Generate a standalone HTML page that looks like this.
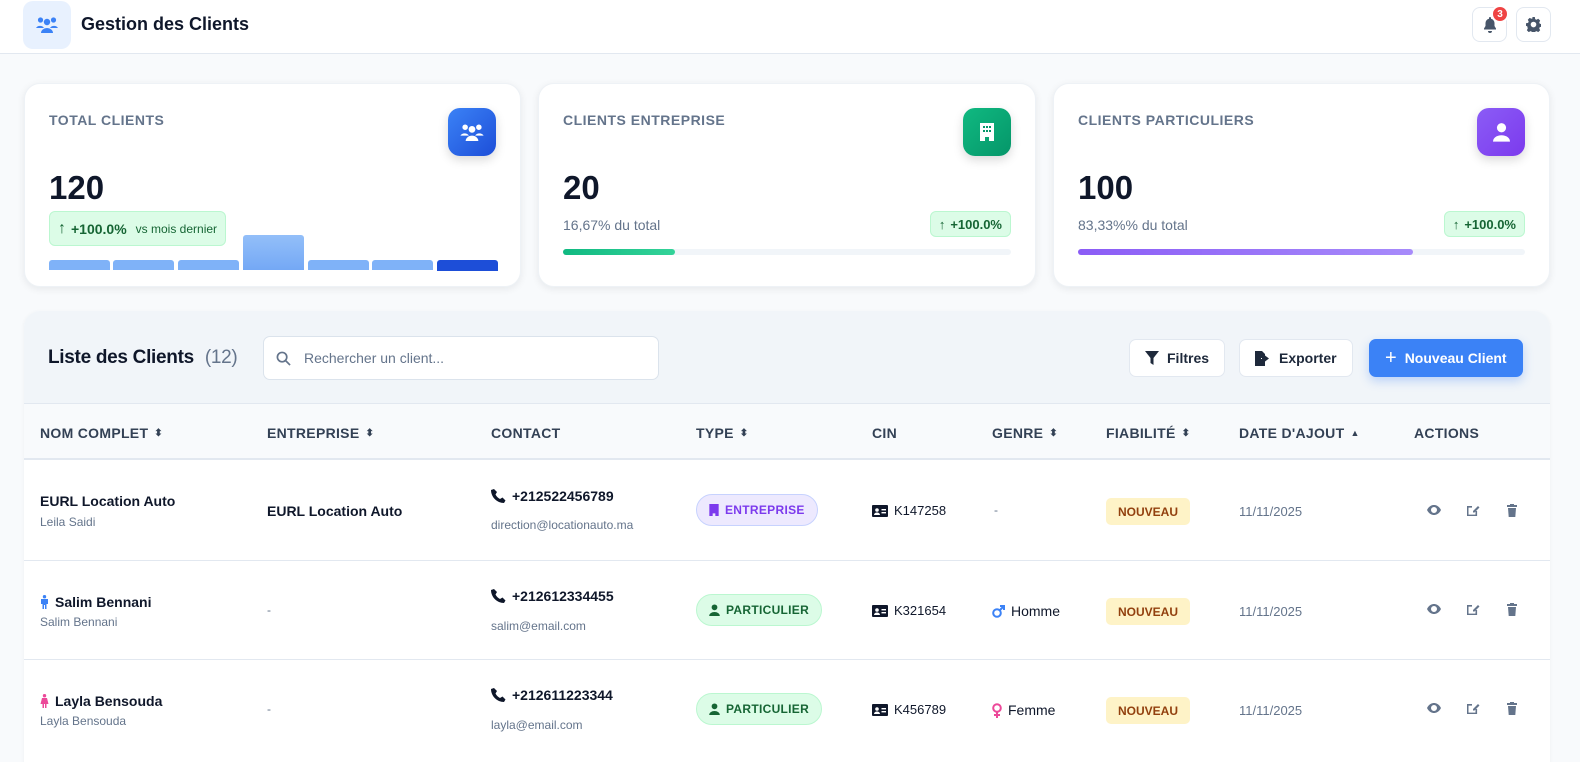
<!DOCTYPE html>
<html style="overflow:hidden"><head><meta charset="utf-8"><style>
*{box-sizing:border-box;margin:0;padding:0}
html,body{overflow:hidden}
body{width:1580px;height:762px;background:#f8fafc;font-family:"Liberation Sans",sans-serif;color:#0f172a;position:relative}
.abs{position:absolute}
header{position:absolute;left:0;top:0;width:1580px;height:54px;background:#fff;border-bottom:1px solid #e2e8f0}
.card{position:absolute;top:83px;height:204px;background:#fff;border-radius:16px;box-shadow:0 2px 8px rgba(15,23,42,.08);border:1px solid #eef2f6}
.ct{position:absolute;left:24px;top:28px;font-size:14px;font-weight:bold;color:#64748b;letter-spacing:.5px}
.num{position:absolute;left:24px;top:85px;font-size:33px;font-weight:bold;color:#0f172a}
.ico{position:absolute;right:24px;top:24px;width:48px;height:48px;border-radius:12px;box-shadow:0 4px 10px rgba(0,0,0,.15);display:flex;align-items:center;justify-content:center}
.pill{position:absolute;background:#dcfce7;border:1px solid #bbf7d0;border-radius:6px;color:#166534;font-weight:bold;font-size:13px;display:flex;align-items:center;gap:5px;padding:0 8px}
.sub{position:absolute;left:24px;top:133px;font-size:14px;color:#64748b}
.bar{position:absolute;left:24px;right:24px;top:165px;height:6px;background:#f1f5f9;border-radius:3px}
.panel{position:absolute;left:24px;top:311px;width:1526px;height:451px;background:#fff;border-radius:16px 16px 0 0;overflow:hidden;box-shadow:0 1px 4px rgba(0,0,0,.05)}
.btn{position:absolute;top:28px;height:38px;border-radius:7px;display:flex;align-items:center;gap:8px;font-size:14px;font-weight:bold;padding:0 15px}
.th{position:absolute;top:114px;font-size:14px;font-weight:bold;color:#334155;letter-spacing:.3px;display:flex;align-items:center;gap:6px}
.row{position:absolute;left:0;width:1526px;height:100px;border-top:1px solid #e2e8f0}
.c{position:absolute;font-size:14px;display:flex;align-items:center;gap:6px;white-space:nowrap}
.b{font-weight:bold}
.g{color:#64748b;font-size:12px}
.badge{position:absolute;left:672px;height:32px;border-radius:16px;display:flex;align-items:center;gap:6px;padding:0 12px;font-size:12px;font-weight:bold;letter-spacing:.3px}
.nv{position:absolute;left:1082px;width:84px;height:27px;background:#fef3c7;border-radius:5px;color:#92400e;font-size:12px;font-weight:bold;display:flex;align-items:center;justify-content:center}
</style></head><body>
<svg width="0" height="0" style="position:absolute"><defs>
<g id="acts" fill="#64748b">
<path d="M0 6C2 2 5 1 7 1s5 1 7 5c-2 4-5 5-7 5S2 10 0 6zm7-3a3 3 0 1 0 0 6 3 3 0 0 0 0-6z"/>
<path d="M40 2h5v1.6h-3.5v7h7V7h1.6v5H40zM46 7l5-5 1.5 1.5-5 5H46z"/>
<path d="M80 1h3V0h4v1h3v2H80zM81 4h8l-.7 9h-6.6z"/>
</g>
<path id="phone" d="M3 0l3 3-1.5 2.5c1 2 2.5 3.5 4.5 4.5L11.5 8.5l3 3L13 14C6 14 0 8 0 1z"/>
<g id="card"><rect x="0" y="0" width="16" height="12" rx="1" fill="#0f172a"/><circle cx="5" cy="5" r="1.8" fill="#fff"/><path d="M2 10a3 2.5 0 0 1 6 0z" fill="#fff"/><rect x="9.5" y="4" width="4.5" height="1.4" fill="#fff"/><rect x="9.5" y="7" width="4.5" height="1.4" fill="#fff"/></g>
</defs></svg>
<header>
<div class="abs" style="left:23px;top:1px;width:48px;height:48px;background:#e8f1fe;border-radius:10px;display:flex;align-items:center;justify-content:center">
<svg width="22" height="18" viewBox="0 0 22 18" fill="#3b82f6"><circle cx="4.5" cy="4" r="2.6"/><circle cx="17.5" cy="4" r="2.6"/><circle cx="11" cy="6" r="3.2"/><path d="M0 12a4.5 4 0 0 1 8 0zM14 12a4.5 4 0 0 1 8 0zM5 17a6 5 0 0 1 12 0z"/></svg></div>
<div class="abs b" style="left:81px;top:14px;font-size:18px">Gestion des Clients</div>
<div class="abs" style="left:1472px;top:7px;width:35px;height:35px;border:1px solid #e2e8f0;border-radius:8px;display:flex;align-items:center;justify-content:center">
<svg width="14" height="16" viewBox="0 0 14 16" fill="#475569"><path d="M7 0c.6 0 1 .4 1 1v.7A4.5 4.5 0 0 1 11.5 6v3l1.5 2.5v1H1v-1L2.5 9V6A4.5 4.5 0 0 1 6 1.7V1c0-.6.4-1 1-1zM5 14h4a2 2 0 0 1-4 0z"/></svg></div>
<div class="abs" style="left:1491px;top:5px;width:18px;height:18px;background:#ef4444;border-radius:50%;border:2px solid #fff;color:#fff;font-size:10px;font-weight:bold;display:flex;align-items:center;justify-content:center">3</div>
<div class="abs" style="left:1516px;top:7px;width:35px;height:35px;border:1px solid #e2e8f0;border-radius:8px;display:flex;align-items:center;justify-content:center">
<svg width="15" height="15" viewBox="0 0 16 16" fill="#475569"><path d="M6.6 0h2.8l.4 2.2 1.3.7 2-1 2 2-1 2 .6 1.3 2.3.4v2.8l-2.3.4-.6 1.3 1 2-2 2-2-1-1.3.6-.4 2.3H6.6l-.4-2.3-1.3-.6-2 1-2-2 1-2L1.3 9.8 0 9.4V6.6l2.2-.4.7-1.3-1-2 2-2 2 1 1.3-.7zM8 5a3 3 0 1 0 0 6 3 3 0 0 0 0-6z"/></svg></div>
</header>

<div class="card" style="left:24px;width:497px">
<div class="ct">TOTAL CLIENTS</div>
<div class="ico" style="background:linear-gradient(135deg,#3b82f6,#1d4ed8)"><svg width="24" height="19" viewBox="0 0 22 18" fill="#fff"><circle cx="4.5" cy="4" r="2.6"/><circle cx="17.5" cy="4" r="2.6"/><circle cx="11" cy="6" r="3.2"/><path d="M0 12a4.5 4 0 0 1 8 0zM14 12a4.5 4 0 0 1 8 0zM5 17a6 5 0 0 1 12 0z"/></svg></div>
<div class="num">120</div>
<div class="pill" style="left:24px;top:127px;height:35px;font-size:14px"><span style="font-size:16px">↑</span> +100.0% <span style="font-size:12px;font-weight:normal;margin-left:4px">vs mois dernier</span></div>
<div class="abs" style="left:24px;top:176px;width:61px;height:10px;background:#7fb2f8;border-radius:3px 3px 0 0"></div>
<div class="abs" style="left:88px;top:176px;width:61px;height:10px;background:#7fb2f8;border-radius:3px 3px 0 0"></div>
<div class="abs" style="left:153px;top:176px;width:61px;height:10px;background:#7fb2f8;border-radius:3px 3px 0 0"></div>
<div class="abs" style="left:218px;top:151px;width:61px;height:35px;background:linear-gradient(#93bff9,#74a8f5);border-radius:3px 3px 0 0"></div>
<div class="abs" style="left:283px;top:176px;width:61px;height:10px;background:#7fb2f8;border-radius:3px 3px 0 0"></div>
<div class="abs" style="left:347px;top:176px;width:61px;height:10px;background:#7fb2f8;border-radius:3px 3px 0 0"></div>
<div class="abs" style="left:412px;top:176px;width:61px;height:11px;background:#1d4ed8;border-radius:3px 3px 0 0"></div>
</div>

<div class="card" style="left:538px;width:498px">
<div class="ct">CLIENTS ENTREPRISE</div>
<div class="ico" style="background:linear-gradient(135deg,#10b981,#059669)"><svg width="14" height="18" viewBox="0 0 14 18" fill="#fff"><path d="M0 0h14v18H9v-4H5v4H0z"/><g fill="#059669"><rect x="3" y="3" width="2" height="2"/><rect x="6" y="3" width="2" height="2"/><rect x="9" y="3" width="2" height="2"/><rect x="3" y="7" width="2" height="2"/><rect x="6" y="7" width="2" height="2"/><rect x="9" y="7" width="2" height="2"/></g></svg></div>
<div class="num">20</div>
<div class="sub">16,67% du total</div>
<div class="pill" style="right:24px;top:127px;height:26px"><span>↑</span> +100.0%</div>
<div class="bar"><div style="width:25%;height:6px;border-radius:3px;background:linear-gradient(90deg,#10b981,#34d399)"></div></div>
</div>

<div class="card" style="left:1053px;width:497px">
<div class="ct">CLIENTS PARTICULIERS</div>
<div class="ico" style="background:linear-gradient(135deg,#8b5cf6,#7c3aed)"><svg width="17" height="20" viewBox="0 0 16 18" fill="#fff"><circle cx="8" cy="5" r="4.3"/><path d="M0 18a8 6 0 0 1 16 0z"/></svg></div>
<div class="num">100</div>
<div class="sub">83,33%% du total</div>
<div class="pill" style="right:24px;top:127px;height:26px"><span>↑</span> +100.0%</div>
<div class="bar"><div style="width:75%;height:6px;border-radius:3px;background:linear-gradient(90deg,#8b5cf6,#a78bfa)"></div></div>
</div>

<div class="panel">
<div class="abs" style="left:0;top:0;width:1526px;height:93px;background:#f1f5f9;border-bottom:1px solid #e2e8f0"></div>
<div class="abs b" style="left:24px;top:36px;font-size:19px;letter-spacing:-.3px">Liste des Clients <span style="font-weight:normal;color:#64748b;margin-left:6px">(12)</span></div>
<div class="abs" style="left:239px;top:25px;width:396px;height:44px;background:#fff;border:1px solid #dbe3ec;border-radius:7px;font-size:14px;color:#64748b;padding:13px 0 0 40px">Rechercher un client...
<svg class="abs" style="left:12px;top:14px" width="15" height="15" viewBox="0 0 16 16" fill="none" stroke="#64748b" stroke-width="1.8"><circle cx="6.5" cy="6.5" r="5"/><path d="M10.5 10.5L15 15"/></svg></div>
<div class="btn" style="left:1105px;background:#fff;border:1px solid #e2e8f0;color:#1e293b"><svg width="14" height="14" viewBox="0 0 14 14" fill="#1e293b"><path d="M0 0h14L8.5 7v7L5.5 12V7z"/></svg>Filtres</div>
<div class="btn" style="left:1215px;background:#fff;border:1px solid #e2e8f0;color:#1e293b"><svg width="16" height="15" viewBox="0 0 16 15" fill="#1e293b"><path d="M0 0h7l3 3v4H6v1h4v7H0z"/><path d="M10 4.5l4 3-4 3V9H7V6h3z"/></svg>Exporter</div>
<div class="btn" style="left:1345px;background:#3b82f6;color:#fff;box-shadow:0 4px 10px rgba(59,130,246,.3);padding:0 16px"><span style="font-size:20px;font-weight:normal">+</span>Nouveau Client</div>
<div class="abs" style="left:0;top:93px;width:1526px;height:56px;background:#f8fafc;border-bottom:2px solid #e2e8f0"></div>
<div class="th" style="left:16px">NOM COMPLET <span style="font-size:10px">⬍</span></div>
<div class="th" style="left:243px">ENTREPRISE <span style="font-size:10px">⬍</span></div>
<div class="th" style="left:467px">CONTACT</div>
<div class="th" style="left:672px">TYPE <span style="font-size:10px">⬍</span></div>
<div class="th" style="left:848px">CIN</div>
<div class="th" style="left:968px">GENRE <span style="font-size:10px">⬍</span></div>
<div class="th" style="left:1082px">FIABILITÉ <span style="font-size:10px">⬍</span></div>
<div class="th" style="left:1215px">DATE D'AJOUT <span style="font-size:9px">▲</span></div>
<div class="th" style="left:1390px">ACTIONS</div>

<div class="row" style="top:150px;border-top:none">
<div class="c b" style="left:16px;top:32px">EURL Location Auto</div>
<div class="c g" style="left:16px;top:54px">Leila Saidi</div>
<div class="c b" style="left:243px;top:42px">EURL Location Auto</div>
<div class="c b" style="left:467px;top:27px"><svg width="15" height="15" viewBox="0 0 15 15" fill="#0f172a"><use href="#phone"/></svg>+212522456789</div>
<div class="c g" style="left:467px;top:57px">direction@locationauto.ma</div>
<div class="badge" style="top:33px;background:#ede9fe;border:1px solid #c7d2fe;color:#7c3aed"><svg width="10" height="12" viewBox="0 0 14 18" fill="#7c3aed"><path d="M0 0h14v18H9v-4H5v4H0z"/></svg>ENTREPRISE</div>
<div class="c" style="left:848px;top:42px;font-size:13px"><svg width="16" height="12"><use href="#card"/></svg>K147258</div>
<div class="c g" style="left:970px;top:42px">-</div>
<div class="nv" style="top:37px">NOUVEAU</div>
<div class="c g" style="left:1215px;top:43px;font-size:13px">11/11/2025</div>
</div>
<div class="row" style="top:249px">
<div class="c b" style="left:16px;top:33px"><svg width="9" height="14" viewBox="0 0 9 14" fill="#3b82f6"><circle cx="4.5" cy="1.7" r="1.7"/><path d="M1 4h7v5H6.5v5h-1.5V10h-1v4H2.5V9H1z"/></svg>Salim Bennani</div>
<div class="c g" style="left:16px;top:54px">Salim Bennani</div>
<div class="c g" style="left:243px;top:42px">-</div>
<div class="c b" style="left:467px;top:27px"><svg width="15" height="15" viewBox="0 0 15 15" fill="#0f172a"><use href="#phone"/></svg>+212612334455</div>
<div class="c g" style="left:467px;top:58px">salim@email.com</div>
<div class="badge" style="top:33px;background:#dcfce7;border:1px solid #bbf7d0;color:#166534"><svg width="11" height="12" viewBox="0 0 16 18" fill="#166534"><circle cx="8" cy="5" r="4.3"/><path d="M0 18a8 6 0 0 1 16 0z"/></svg>PARTICULIER</div>
<div class="c" style="left:848px;top:42px;font-size:13px"><svg width="16" height="12"><use href="#card"/></svg>K321654</div>
<div class="c" style="left:968px;top:42px"><svg width="13" height="14" viewBox="0 0 13 14" fill="none" stroke="#3b82f6" stroke-width="2"><circle cx="5" cy="9" r="3.8"/><path d="M8 6l4-4M8 2h4v4"/></svg>Homme</div>
<div class="nv" style="top:37px">NOUVEAU</div>
<div class="c g" style="left:1215px;top:43px;font-size:13px">11/11/2025</div>
</div>
<div class="row" style="top:348px">
<div class="c b" style="left:16px;top:33px"><svg width="9" height="14" viewBox="0 0 9 14" fill="#ec4899"><circle cx="4.5" cy="1.7" r="1.7"/><path d="M2 4h5l1.5 6H6.5v4h-1.5V10h-1v4H2.5V10H.5z"/></svg>Layla Bensouda</div>
<div class="c g" style="left:16px;top:54px">Layla Bensouda</div>
<div class="c g" style="left:243px;top:42px">-</div>
<div class="c b" style="left:467px;top:27px"><svg width="15" height="15" viewBox="0 0 15 15" fill="#0f172a"><use href="#phone"/></svg>+212611223344</div>
<div class="c g" style="left:467px;top:58px">layla@email.com</div>
<div class="badge" style="top:33px;background:#dcfce7;border:1px solid #bbf7d0;color:#166534"><svg width="11" height="12" viewBox="0 0 16 18" fill="#166534"><circle cx="8" cy="5" r="4.3"/><path d="M0 18a8 6 0 0 1 16 0z"/></svg>PARTICULIER</div>
<div class="c" style="left:848px;top:42px;font-size:13px"><svg width="16" height="12"><use href="#card"/></svg>K456789</div>
<div class="c" style="left:968px;top:42px"><svg width="10" height="15" viewBox="0 0 10 15" fill="none" stroke="#ec4899" stroke-width="2"><circle cx="5" cy="5" r="3.8"/><path d="M5 9v6M2 12h6"/></svg>Femme</div>
<div class="nv" style="top:37px">NOUVEAU</div>
<div class="c g" style="left:1215px;top:43px;font-size:13px">11/11/2025</div>
</div>
</div>

<svg class="abs" style="left:1427px;top:504px" width="92" height="14"><use href="#acts"/></svg>
<svg class="abs" style="left:1427px;top:603px" width="92" height="14"><use href="#acts"/></svg>
<svg class="abs" style="left:1427px;top:702px" width="92" height="14"><use href="#acts"/></svg>
</body></html>
